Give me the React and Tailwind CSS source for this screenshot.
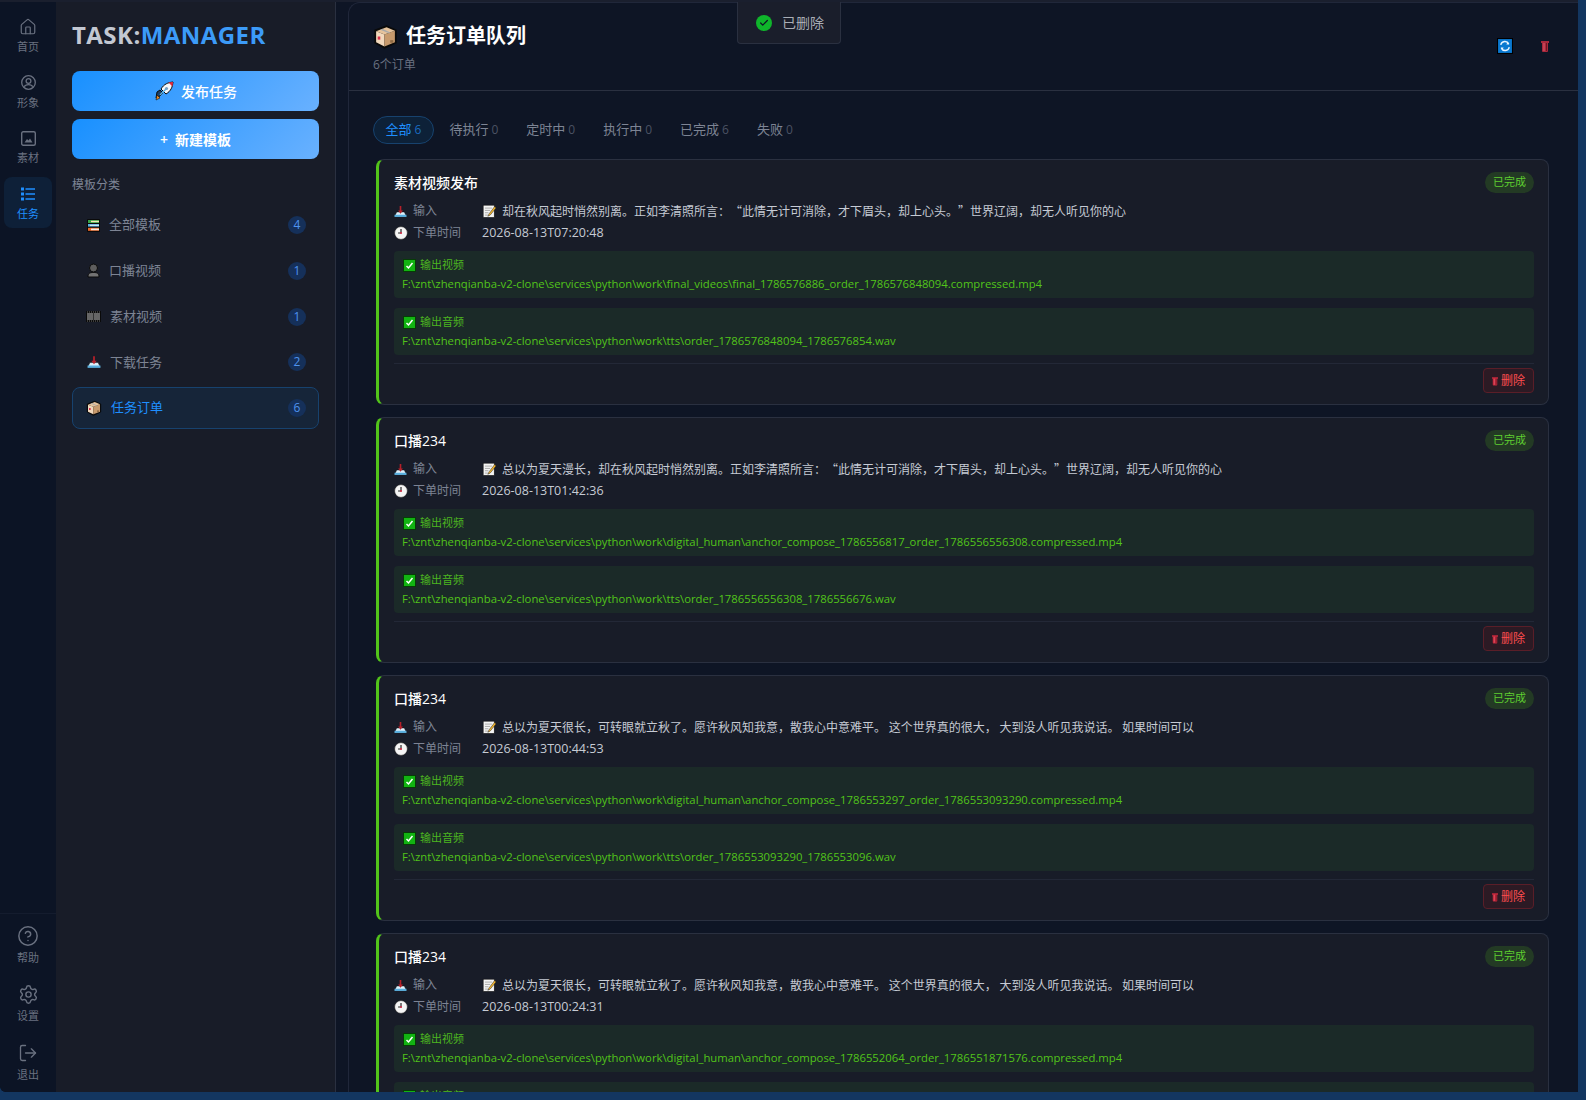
import React from "react";
import { House, CircleHelp, Settings, LogOut, Check } from "lucide-react";

const FONT = "font-['Open_Sans','Noto_Sans_CJK_SC',sans-serif]";

const Box = ({ s = 13 }) => (
  <svg width={s} height={s} viewBox="0 0 24 24" className="shrink-0">
    <path d="M2 6 L13 2 L22 6 L22 18 L11 23 L2 18Z" fill="#111" stroke="#0a0a0a" strokeWidth="1.5" />
    <path d="M3 7 L11 10 L11 21.5 L3 17.5Z" fill="#f2d9bd" />
    <path d="M11 10 L21 6.5 L21 17.5 L11 21.5Z" fill="#c79a6d" />
    <path d="M3 7 L13 3 L21 6.5 L11 10Z" fill="#e6c39c" />
    <path d="M7 5.4 L16 9 L16 8 L9 4.6Z" fill="#a9a9a9" />
    <rect x="4.5" y="12" width="2.5" height="3" fill="#d9304a" />
    <rect x="16.5" y="15.5" width="3" height="2.5" fill="#8f6b45" />
  </svg>
);
const Inbox = ({ s = 13 }) => (
  <svg width={s} height={s} viewBox="0 0 24 24" className="shrink-0">
    <path d="M1 21 L5 13 L19 13 L23 21Z" fill="#dff1fb" stroke="#0a0a0a" strokeWidth="0.8" />
    <rect x="1" y="18" width="22" height="4" fill="#5ab0e0" />
    <path d="M10.5 2h3v8h3l-4.5 6-4.5-6h3z" fill="#b5202a" />
  </svg>
);
const Clock = ({ s = 14 }) => (
  <svg width={s} height={s} viewBox="0 0 24 24" className="shrink-0">
    <circle cx="12" cy="12" r="11" fill="#f5f5f5" stroke="#111" strokeWidth="1" />
    <path d="M12 5v7h-5" fill="none" stroke="#222" strokeWidth="2" />
    <circle cx="12" cy="12" r="1.8" fill="#d9304a" />
  </svg>
);
const Memo = ({ s = 14 }) => (
  <svg width={s} height={s} viewBox="0 0 24 24" className="shrink-0">
    <rect x="2" y="2" width="19" height="21" fill="#f4f4f4" stroke="#111" strokeWidth="1" />
    <path d="M5 7h12M5 11h9M5 15h6M5 19h5" stroke="#9a9a9a" strokeWidth="1.4" />
    <path d="M22 4 L12 17 L10 21 L14 19 L24 7Z" fill="#f5b82e" stroke="#111" strokeWidth="0.8" />
  </svg>
);
const CheckBox = () => (
  <svg width="13" height="13" viewBox="0 0 13 13" className="shrink-0">
    <rect x="0.5" y="0.5" width="12" height="12" fill="#12b312" stroke="#063d06" />
    <path d="M3.5 7 L5.5 9 L9.5 4" fill="none" stroke="#fff" strokeWidth="1.5" />
  </svg>
);
const Trash = ({ w = 8, h = 12, fill = "#a8293c" }) => (
  <svg width={w} height={h} viewBox="0 0 8 12" className="shrink-0">
    <rect x="0" y="1" width="8" height="2" fill={fill} />
    <rect x="1" y="2" width="6" height="10" rx="1" fill={fill} />
    <rect x="2.5" y="3" width="1" height="8" fill="#e05a6c" />
    <rect x="5" y="3" width="1" height="8" fill="#6b1522" />
  </svg>
);
const Books = () => (
  <svg width="13" height="13" viewBox="0 0 13 13" className="shrink-0">
    <rect width="13" height="13" rx="1" fill="#0a0a0a" />
    <rect x="1" y="1" width="11" height="3" fill="#3aa54a" />
    <rect x="4" y="1.8" width="8" height="1.4" fill="#f3e7b4" />
    <rect x="1" y="5" width="11" height="2.6" fill="#5cb5e6" />
    <rect x="3" y="5.8" width="9" height="1" fill="#e9f2f6" />
    <rect x="1" y="8.8" width="11" height="3" fill="#ef6a2a" />
    <rect x="4" y="9.6" width="8" height="1.6" fill="#f5efe6" />
  </svg>
);
const Bust = () => (
  <svg width="13" height="15" viewBox="0 0 13 15" className="shrink-0">
    <path d="M1 14 C1 10 3 9.5 6.5 9.5 C10 9.5 12 10 12 14Z" fill="#737373" stroke="#0a0a0a" />
    <circle cx="6.5" cy="5" r="4" fill="#5e5e5e" stroke="#0a0a0a" />
  </svg>
);
const Film = () => (
  <svg width="15" height="11" viewBox="0 0 15 11" className="shrink-0">
    <rect width="15" height="11" fill="#0a0a0a" />
    <rect x="1" y="2" width="13" height="7" fill="#666" />
    <rect x="7" y="2" width="1" height="7" fill="#333" />
    <path d="M1 1h13M1 10h13" stroke="#888" strokeWidth="0.8" strokeDasharray="1 1" />
  </svg>
);
const Rocket = () => (
  <svg width="20" height="20" viewBox="0 0 20 20" className="shrink-0">
    <path d="M3 11 L6 9 L9 12 L6 15 L2 17 Z" fill="#1b3f66" stroke="#0a0a0a" strokeWidth="1" />
    <path d="M3 14 L6 17 L2 19 Z" fill="#f08a1d" stroke="#111" strokeWidth="0.6" />
    <path d="M7 8 C10 3 14 1.5 19 1 C18.5 6 17 10 12 13 Z" fill="#f5f7fa" stroke="#0a0a0a" strokeWidth="1" />
    <path d="M14.5 1.6 L19 1 L18.4 5.5 Z" fill="#e5283a" />
    <circle cx="12.5" cy="7.5" r="1.6" fill="#7aa0c4" />
    <path d="M6 14 L12 8" stroke="#5ab0e0" strokeWidth="1.5" />
  </svg>
);
const Refresh = () => (
  <svg width="16" height="16" viewBox="0 0 15 15" className="shrink-0">
    <rect x="0.5" y="0.5" width="14" height="14" fill="#0a78d0" stroke="#000" />
    <path d="M3.5 6.5 A4 4 0 0 1 11 5.5 M11.5 8.5 A4 4 0 0 1 4 9.5" fill="none" stroke="#e8f4ff" strokeWidth="1.3" />
    <path d="M10 3.5 L11.5 6 L8.8 6Z M5 11.5 L3.5 9 L6.2 9Z" fill="#e8f4ff" />
  </svg>
);
const UserRound = ({ s }) => (
  <svg width={s} height={s} viewBox="0 0 15 15" fill="none" stroke="currentColor" strokeWidth="1.3" className="shrink-0">
    <circle cx="7.5" cy="7.5" r="6.8" />
    <circle cx="7.5" cy="6" r="2.4" />
    <path d="M3.2 11.8 C4 10 5.5 9.6 7.5 9.6 C9.5 9.6 11 10 11.8 11.8" />
  </svg>
);
const Picture = ({ s }) => (
  <svg width={s} height={s} viewBox="0 0 15 15" className="shrink-0">
    <rect x="0.7" y="0.7" width="13.6" height="13.6" rx="1.5" fill="none" stroke="currentColor" strokeWidth="1.4" />
    <path d="M3.5 11.5 L6 8 L7.5 9.5 L9 7.5 L11.5 11.5Z" fill="currentColor" />
  </svg>
);
const ListIcon = ({ s }) => (
  <svg width={s} height={s} viewBox="0 0 14 14" fill="none" stroke="currentColor" className="shrink-0">
    <rect x="0.5" y="1" width="2" height="2" />
    <rect x="0.5" y="6" width="2" height="2" />
    <rect x="0.5" y="11" width="2" height="2" />
    <path d="M4.5 2h9.5M4.5 7h9.5M4.5 12h9.5" strokeWidth="1.3" />
  </svg>
);

const RailItem = ({ icon, label, active, big }) => (
  <div
    className={
      "flex h-[51px] w-12 flex-col items-center justify-center gap-[3px] rounded-lg text-[11px] leading-[15px] " +
      (active ? "bg-[#0e2038] text-[#1f8fff]" : "text-[#6a7180]")
    }
  >
    <span className={"flex items-center justify-center " + (big ? "h-[22px]" : "h-[18px]")}>{icon}</span>
    <span>{label}</span>
  </div>
);

const CatItem = ({ icon, label, count, active, tx }) => (
  <div
    className={
      "flex h-[42px] items-center rounded-lg border pl-[13px] pr-3 text-[13px] " +
      (active ? "border-[#17426e] bg-[#162539] text-[#1f8fff]" : "border-transparent text-[#7d8494]")
    }
  >
    <span className="flex w-[15px] justify-center">{icon}</span>
    <span className={tx}>{label}</span>
    <span className="ml-auto flex h-[18px] w-[18px] items-center justify-center rounded-full bg-[#15305a] text-[12px] text-[#4f93ee]">
      {count}
    </span>
  </div>
);

const Tab = ({ label, n, active }) => (
  <div
    className={
      "flex h-7 items-center gap-[3px] rounded-full border px-[11.5px] text-[13px] " +
      (active ? "border-[#17426e] bg-[#0d2138] text-[#1f8fff]" : "border-transparent text-[#7d8494]")
    }
  >
    <span>{label}</span>
    <span className={"text-[12px] " + (active ? "text-[#1a6cc0]" : "text-[#4b5263]")}>{n}</span>
  </div>
);

const Output = ({ label, path }) => (
  <div className="flex h-[47px] flex-col justify-center gap-[4px] rounded bg-[#1b2a28] px-2">
    <div className="flex items-center gap-[4px] pl-[1px] text-[11px] leading-[14px] text-[#4cb520]">
      <CheckBox />
      <span>{label}</span>
    </div>
    <div className="whitespace-nowrap text-[11.3px] leading-[15px] text-[#52c41a]">{path}</div>
  </div>
);

const Card = ({ title, input, time, video, audio }) => (
  <div className="shrink-0 rounded-lg border border-l-[3px] border-[#2a3040] border-l-[#52c41a] bg-[#181c28] pt-[10px] pb-[11px] pl-[15px] pr-[14px]">
    <div className="flex h-[24px] items-center justify-between text-[14px] font-medium text-white">
      <span>{title}</span>
      <span className="flex h-[21px] items-center rounded-full bg-[#233a24] px-2 text-[11px] font-normal text-[#5fce30]">已完成</span>
    </div>
    <div className="mt-[6px] flex h-[22px] items-center text-[12px]">
      <span className="flex w-[88px] items-center gap-[6px] text-[#7d8494]">
        <Inbox />
        输入
      </span>
      <span className="flex items-center gap-[6px] whitespace-nowrap font-['Noto_Sans_CJK_SC',sans-serif] text-[#c6cbd4] [text-spacing-trim:space-all]">
        <Memo />
        {input}
      </span>
    </div>
    <div className="flex h-[22px] items-center text-[12px]">
      <span className="flex w-[88px] items-center gap-[5px] text-[#7d8494]">
        <Clock />
        下单时间
      </span>
      <span className="text-[12.5px] text-[#c6cbd4]">{time}</span>
    </div>
    <div className="mt-[7px] flex flex-col gap-[10px]">
      <Output label="输出视频" path={video} />
      <Output label="输出音频" path={audio} />
    </div>
    <div className="mt-2 flex justify-end border-t border-[#232837] pt-[4px]">
      <button className="flex h-[25px] w-[51px] items-center justify-center gap-[3px] rounded border border-[#5a1e28] bg-[#2c1a24] text-[12px] text-[#ff4d4f]">
        <Trash w={6} h={10} fill="#c4283c" />
        删除
      </button>
    </div>
  </div>
);

const BASE = "F:\\znt\\zhenqianba-v2-clone\\services\\python\\work\\";

const orders = [
  {
    title: "素材视频发布",
    input: "却在秋风起时悄然别离。正如李清照所言：“此情无计可消除，才下眉头，却上心头。”世界辽阔，却无人听见你的心",
    time: "2026-08-13T07:20:48",
    video: BASE + "final_videos\\final_1786576886_order_1786576848094.compressed.mp4",
    audio: BASE + "tts\\order_1786576848094_1786576854.wav",
  },
  {
    title: "口播234",
    input: "总以为夏天漫长，却在秋风起时悄然别离。正如李清照所言：“此情无计可消除，才下眉头，却上心头。”世界辽阔，却无人听见你的心",
    time: "2026-08-13T01:42:36",
    video: BASE + "digital_human\\anchor_compose_1786556817_order_1786556556308.compressed.mp4",
    audio: BASE + "tts\\order_1786556556308_1786556676.wav",
  },
  {
    title: "口播234",
    input: "总以为夏天很长，可转眼就立秋了。愿许秋风知我意，散我心中意难平。 这个世界真的很大， 大到没人听见我说话。 如果时间可以",
    time: "2026-08-13T00:44:53",
    video: BASE + "digital_human\\anchor_compose_1786553297_order_1786553093290.compressed.mp4",
    audio: BASE + "tts\\order_1786553093290_1786553096.wav",
  },
  {
    title: "口播234",
    input: "总以为夏天很长，可转眼就立秋了。愿许秋风知我意，散我心中意难平。 这个世界真的很大， 大到没人听见我说话。 如果时间可以",
    time: "2026-08-13T00:24:31",
    video: BASE + "digital_human\\anchor_compose_1786552064_order_1786551871576.compressed.mp4",
    audio: BASE + "tts\\order_1786551871576_1786551874.wav",
  },
];

export default function App() {
  return (
    <div className={"h-[1100px] w-full overflow-hidden bg-[#133660] " + FONT}>
      <div className="relative flex h-[1092px] w-[1578px] flex-col overflow-hidden rounded-bl-md bg-[#0e1525]">
        <div className="h-[2px] shrink-0 bg-[#1a1f2e]" />
        <div className="flex min-h-0 flex-1">
          <aside className="flex w-[56px] shrink-0 flex-col items-center bg-[#0c1425] pt-[8.5px] pb-[5px]">
            <div className="flex flex-col gap-[4.5px]">
              <RailItem icon={<House size={18} strokeWidth={1.6} />} label="首页" />
              <RailItem icon={<UserRound s={15} />} label="形象" />
              <RailItem icon={<Picture s={15} />} label="素材" />
              <RailItem icon={<ListIcon s={14} />} label="任务" active />
            </div>
            <div className="mt-auto flex w-full flex-col items-center gap-[7.5px] border-t border-[#141c2e] pt-[5px]">
              <RailItem big icon={<CircleHelp size={22} strokeWidth={1.6} />} label="帮助" />
              <RailItem big icon={<Settings size={21} strokeWidth={1.6} />} label="设置" />
              <RailItem big icon={<LogOut size={20} strokeWidth={1.6} />} label="退出" />
            </div>
          </aside>
          <nav className="flex w-[280px] shrink-0 flex-col border-r border-[#2a3040] bg-[#181c28] px-4 pt-[14px]">
            <div className="h-[38px] text-[24px] font-bold leading-[38px] tracking-[0.45px] whitespace-nowrap">
              <span className="text-[#c3c8d2]">TASK:</span>
              <span className="text-[#3c9bf8]">MANAGER</span>
            </div>
            <button className="mt-[17px] flex h-10 items-center justify-center gap-[7px] rounded-lg bg-[linear-gradient(135deg,#1890ff,#69b1ff)] text-[14px] font-medium text-white">
              <Rocket />
              发布任务
            </button>
            <button className="mt-2 flex h-10 items-center justify-center gap-[7px] rounded-lg bg-[linear-gradient(135deg,#1890ff,#69b1ff)] text-[14px] font-semibold text-white">
              <span>+</span>
              新建模板
            </button>
            <div className="mt-[18px] text-[12px] leading-4 text-[#7d8494]">模板分类</div>
            <div className="mt-[11px] flex flex-col gap-[3.75px]">
              <CatItem icon={<Books />} label="全部模板" count="4" tx="ml-[8px]" />
              <CatItem icon={<Bust />} label="口播视频" count="1" tx="ml-[8px]" />
              <CatItem icon={<Film />} label="素材视频" count="1" tx="ml-[9px]" />
              <CatItem icon={<Inbox s={14} />} label="下载任务" count="2" tx="ml-[9px]" />
              <CatItem icon={<Box s={16} />} label="任务订单" count="6" tx="ml-[10px]" active />
            </div>
          </nav>
          <main className="flex min-w-0 flex-1 flex-col pl-3">
            <div className="flex min-h-0 flex-1 flex-col rounded-tl-xl border-l border-t border-[#20273a] bg-[#0e1525]">
              <header className="flex h-[88px] shrink-0 items-center justify-between border-b border-[#2a3040] pl-6 pr-[29px]">
                <div className="pt-[2px]">
                  <div className="flex items-center gap-[8px] text-[20px] font-bold leading-7 text-white">
                    <Box s={25} />
                    任务订单队列
                  </div>
                  <div className="mt-[7px] text-[12px] leading-4 text-[#6a7180]">6个订单</div>
                </div>
                <div className="flex items-center gap-[28px] pb-[2px]">
                  <Refresh />
                  <Trash />
                </div>
              </header>
              <div className="min-h-0 flex-1 overflow-hidden pl-6 pr-[29px] pt-[25px]">
                <div className="flex gap-[3px]">
                  <Tab label="全部" n="6" active />
                  <Tab label="待执行" n="0" />
                  <Tab label="定时中" n="0" />
                  <Tab label="执行中" n="0" />
                  <Tab label="已完成" n="6" />
                  <Tab label="失败" n="0" />
                </div>
                <div className="mt-[15px] ml-[3px] flex flex-col gap-3">
                  {orders.map((o, i) => (
                    <Card key={i} {...o} />
                  ))}
                </div>
              </div>
            </div>
          </main>
        </div>
        <div className="absolute left-[737px] top-[2px] flex h-[42px] w-[104px] items-center gap-[10px] rounded-b border border-t-0 border-[#2a3040] bg-[#1a1e2b] pl-[18px] text-[14px] text-[#a9adb5]">
          <span className="flex h-4 w-4 items-center justify-center rounded-full bg-[#0fb52b] text-[#0e1525]">
            <Check size={10} strokeWidth={3} />
          </span>
          已删除
        </div>
      </div>
    </div>
  );
}
